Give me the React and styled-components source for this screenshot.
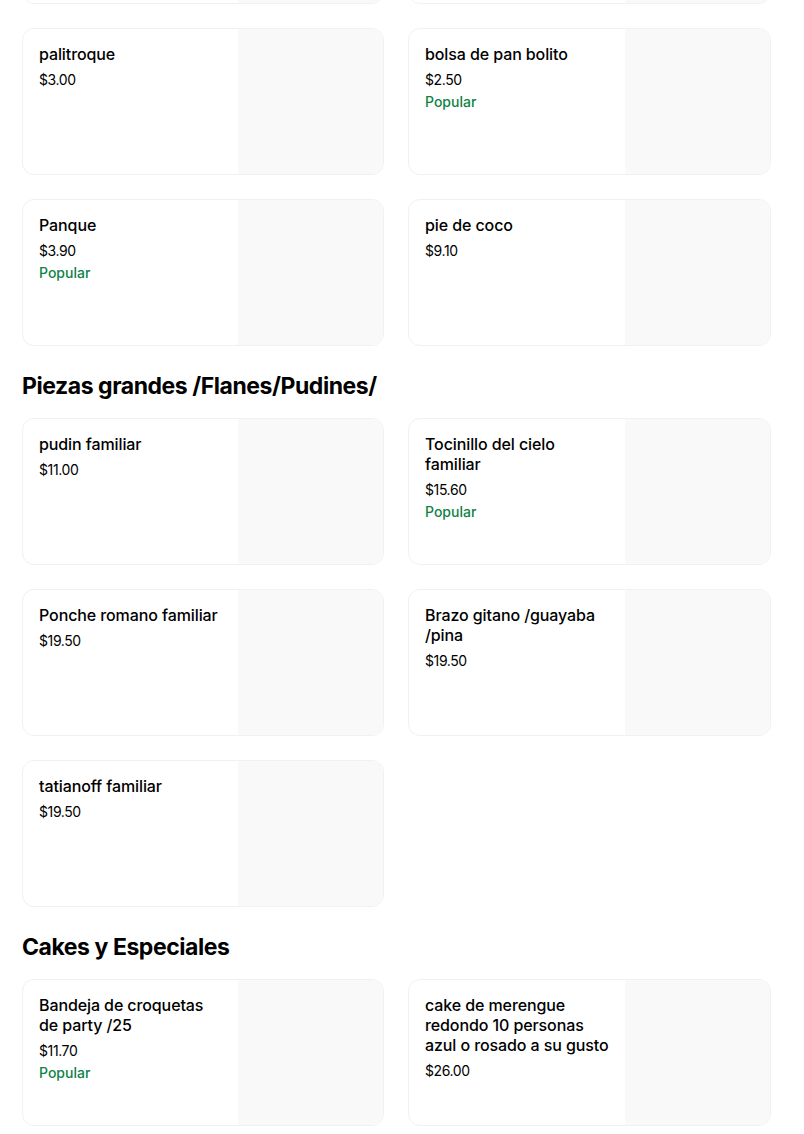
import React from "react";
import styled, { createGlobalStyle } from "styled-components";

const Global = createGlobalStyle`
  * { box-sizing: border-box; }
  html, body { margin: 0; padding: 0; background: #fff; }
  body { font-family: Inter, "Noto Sans", Arial, sans-serif; color: #000; overflow: hidden; }
`;

const Page = styled.main`
  width: 771px;
  padding-left: 22px;
  margin-top: -143px;
`;

const Section = styled.section`
  display: flex;
  flex-direction: column;
`;

const Heading = styled.h2`
  margin: 24px 0 16px;
  font-size: 23px;
  line-height: 32px;
  font-weight: 700;
  letter-spacing: -0.45px;
`;

const Grid = styled.div`
  display: grid;
  grid-template-columns: 362px 363px;
  gap: 24px;
`;

const Card = styled.article`
  display: flex;
  height: 147px;
  border: 1px solid #f1f1f1;
  border-radius: 12px;
  overflow: hidden;
  background: #fff;
`;

const Info = styled.div`
  flex: 1;
  min-width: 0;
  padding: 15px 15px 16px 16px;
  display: flex;
  flex-direction: column;
`;

const Title = styled.div`
  font-size: 16px;
  line-height: 20px;
  font-weight: 500;
  letter-spacing: -0.1px;
`;

const Price = styled.div`
  margin-top: 6px;
  font-size: 14px;
  line-height: 20px;
  font-weight: 400;
  letter-spacing: -0.4px;
  color: #000;
`;

const Badge = styled.div`
  margin-top: 2px;
  font-size: 14px;
  line-height: 20px;
  font-weight: 500;
  color: #0e8345;
`;

const Thumb = styled.div`
  width: 145px;
  flex-shrink: 0;
  background: #f9f9f9;
`;

const sections = [
  {
    title: null,
    items: [
      { name: "", price: "" },
      { name: "", price: "" },
      { name: "palitroque", price: "$3.00" },
      { name: "bolsa de pan bolito", price: "$2.50", popular: true },
      { name: "Panque", price: "$3.90", popular: true },
      { name: "pie de coco", price: "$9.10" },
    ],
  },
  {
    title: "Piezas grandes /Flanes/Pudines/",
    items: [
      { name: "pudin familiar", price: "$11.00" },
      { name: "Tocinillo del cielo familiar", price: "$15.60", popular: true },
      { name: "Ponche romano familiar", price: "$19.50" },
      { name: "Brazo gitano /guayaba /pina", price: "$19.50" },
      { name: "tatianoff familiar", price: "$19.50" },
    ],
  },
  {
    title: "Cakes y Especiales",
    items: [
      { name: "Bandeja de croquetas de party /25", price: "$11.70", popular: true },
      { name: "cake de merengue redondo 10 personas azul o rosado a su gusto", price: "$26.00" },
    ],
  },
];

function Item({ name, price, popular }) {
  return (
    <Card>
      <Info>
        {name && <Title>{name}</Title>}
        {price && <Price>{price}</Price>}
        {popular && <Badge>Popular</Badge>}
      </Info>
      <Thumb />
    </Card>
  );
}

export default function App() {
  return (
    <>
      <Global />
      <Page>
        {sections.map((s, i) => (
          <Section key={i}>
            {s.title && <Heading>{s.title}</Heading>}
            <Grid>
              {s.items.map((it, j) => (
                <Item key={j} {...it} />
              ))}
            </Grid>
          </Section>
        ))}
      </Page>
    </>
  );
}
